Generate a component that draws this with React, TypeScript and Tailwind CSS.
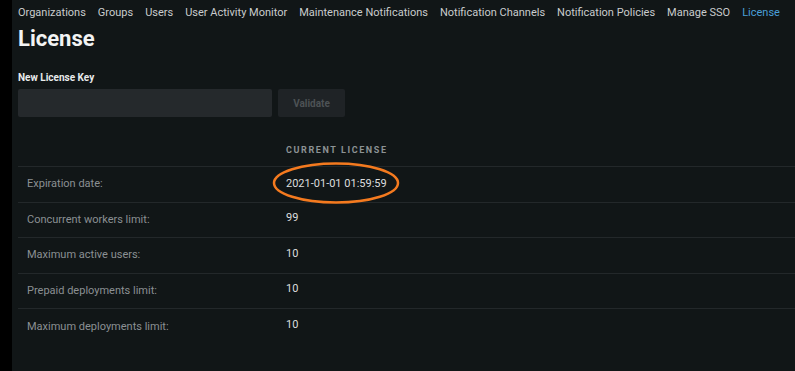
import React from "react";

const nav = [
  "Organizations",
  "Groups",
  "Users",
  "User Activity Monitor",
  "Maintenance Notifications",
  "Notification Channels",
  "Notification Policies",
  "Manage SSO",
];

const rows: [string, string][] = [
  ["Expiration date:", "2021-01-01 01:59:59"],
  ["Concurrent workers limit:", "99"],
  ["Maximum active users:", "10"],
  ["Prepaid deployments limit:", "10"],
  ["Maximum deployments limit:", "10"],
];

export default function App() {
  return (
    <div
      className="flex h-[371px] w-[795px] overflow-hidden bg-black"
      style={{ fontFamily: "Roboto, 'Liberation Sans', sans-serif" }}
    >
      <div className="w-[12px] shrink-0 bg-black" />
      <div className="flex min-w-0 flex-1 flex-col bg-[#111617] pl-[6px]">
        <nav className="flex h-[26px] items-center gap-[12px] whitespace-nowrap pt-[1px] text-[11px] text-[#c9cccd]">
          {nav.map((n) => (
            <span key={n}>{n}</span>
          ))}
          <span className="text-[#4a9fd8]">License</span>
        </nav>
        <h1 className="text-[22px] font-bold leading-[26px] text-[#f2f3f3]">License</h1>
        <div className="mt-[20px] text-[10px] font-bold leading-[12px] text-[#e8eaeb]">New License Key</div>
        <div className="mt-[5px] flex gap-[6px]">
          <div className="h-[28px] w-[254px] rounded-[2px] bg-[#25292c]" />
          <div className="flex h-[28px] w-[67px] items-center justify-center rounded-[2px] bg-[#1f2326] text-[10px] font-bold text-[#4d5255]">
            Validate
          </div>
        </div>
        <div className="mt-[18px]">
          <div className="flex h-[32px] items-center border-b border-[#23282a]">
            <div className="w-[268px]" />
            <div className="text-[9px] font-bold tracking-[1.6px] text-[#8c9294]">CURRENT LICENSE</div>
          </div>
          {rows.map(([label, value], i) => (
            <div
              key={label}
              className={`relative flex h-[35.5px] items-center ${i === rows.length - 1 ? "" : "border-b border-[#23282a]"}`}
            >
              <div className="w-[268px] pl-[9px] text-[11px] text-[#8b9093]">{label}</div>
              <div className={`text-[11px] text-[#dcdedf] ${i === 0 ? "" : "-mt-[3px]"}`}>{value}</div>
              {i === 0 && (
                <svg
                  className="pointer-events-none absolute left-[254px] top-[-6px]"
                  width="130"
                  height="44"
                  viewBox="0 0 130 44"
                >
                  <ellipse cx="64" cy="22" rx="62" ry="19.5" fill="none" stroke="#f47a1f" strokeWidth="2.5" />
                </svg>
              )}
            </div>
          ))}
        </div>
      </div>
    </div>
  );
}
